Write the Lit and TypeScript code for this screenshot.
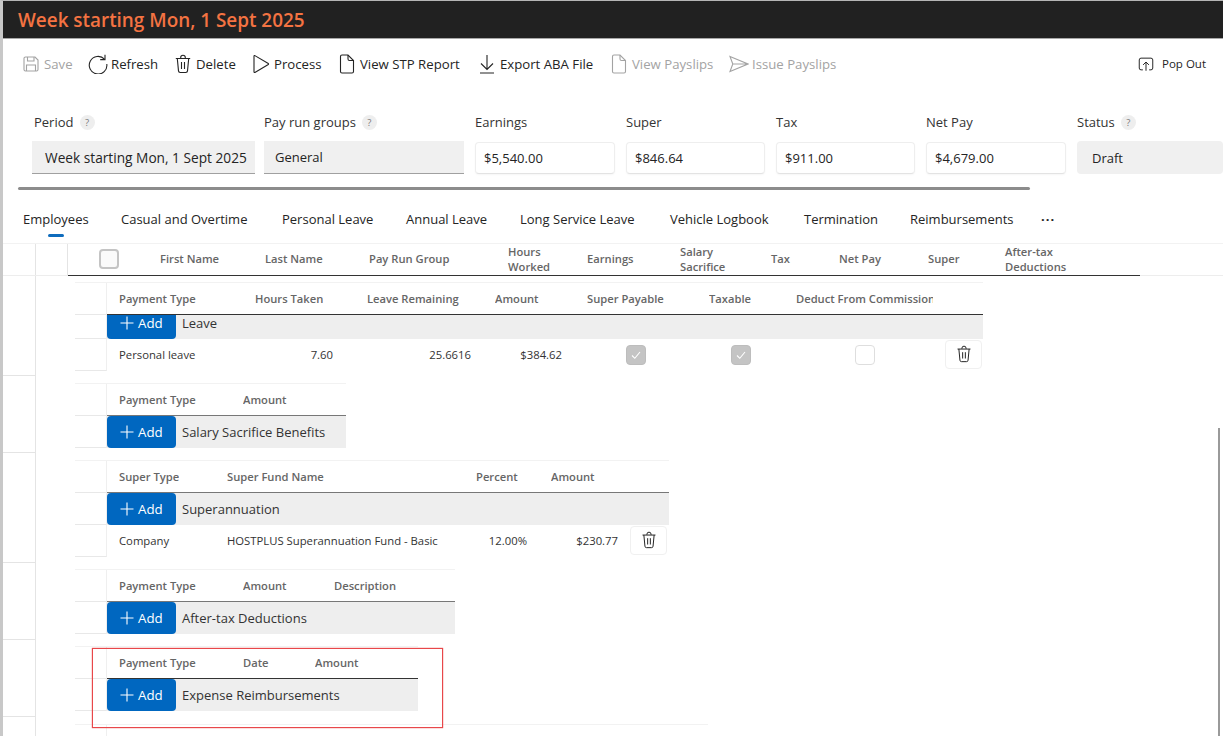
import { LitElement, html, css, svg, nothing } from "lit";
import { customElement } from "lit/decorators.js";

const I = {
  save: svg`<path d="M3 4.500A1.500 1.500 0 0 1 4.500 3H14l3 3v9.500a1.500 1.500 0 0 1-1.500 1.500h-11A1.500 1.500 0 0 1 3 15.500z"/><path d="M6.500 3v4h6.500V3M5.500 17v-6h9v6"/>`,
  refresh: svg`<path d="M16.500 5.200A8.800 8.800 0 1 0 18.800 10"/><path d="M17 .8v4.800h-4.800"/>`,
  trash: svg`<path d="M7.700 4.300V3.600A2.300 2.300 0 0 1 12.300 3.600v.7M2.800 4.500h14.400M4.300 4.500l1.200 12.400A1.700 1.700 0 0 0 7.200 18.500h5.600a1.700 1.700 0 0 0 1.700-1.600l1.200-12.400M8.500 8v7M11.500 8v7"/>`,
  play: svg`<path d="M3 2.100v15.800a.6.6 0 0 0 .9.500l13.400-7.900a.6.6 0 0 0 0-1L3.900 1.600a.6.6 0 0 0-.9.500z"/>`,
  doc: svg`<path d="M3.500 2.500A1.500 1.500 0 0 1 5 1h6l5.500 5.500v11A1.500 1.500 0 0 1 15 19H5a1.500 1.500 0 0 1-1.500-1.500z"/><path d="M11 1v4A1.500 1.500 0 0 0 12.500 6.500h4"/>`,
  down: svg`<path d="M10 1v14M4 9.500l6 6 6-6M3 19h14"/>`,
  send: svg`<path d="M1 2.500l18 7.500-18 7.500 2.800-7.500zM3.800 10H19"/>`,
  pop: svg`<path d="M6.500 16.500H4.500A2 2 0 0 1 2.500 14.500v-9a2 2 0 0 1 2-2h11a2 2 0 0 1 2 2v9a2 2 0 0 1-2 2h-2M10 17.500V8M6.800 11L10 7.800l3.200 3.200"/>`,
};

const ico = (p: unknown, s = 20) =>
  html`<svg class="ico" width=${s} height=${s} viewBox="0 0 20 20">${p}</svg>`;

const toolbar = [
  { t: "Save", i: I.save, off: true },
  { t: "Refresh", i: I.refresh },
  { t: "Delete", i: I.trash },
  { t: "Process", i: I.play },
  { t: "View STP Report", i: I.doc },
  { t: "Export ABA File", i: I.down },
  { t: "View Payslips", i: I.doc, off: true },
  { t: "Issue Payslips", i: I.send, off: true },
];

const fields = [
  { l: "Period", v: "Week starting Mon, 1 Sept 2025", k: "ro", h: true },
  { l: "Pay run groups", v: "General", k: "ro", h: true },
  { l: "Earnings", v: "$5,540.00", k: "inp" },
  { l: "Super", v: "$846.64", k: "inp" },
  { l: "Tax", v: "$911.00", k: "inp" },
  { l: "Net Pay", v: "$4,679.00", k: "inp" },
  { l: "Status", v: "Draft", k: "st", h: true },
];

const tabs = ["Employees", "Casual and Overtime", "Personal Leave", "Annual Leave", "Long Service Leave", "Vehicle Logbook", "Termination", "Reimbursements"];

const mainCols: [string[], number][] = [
  [["First Name"], 105], [["Last Name"], 104], [["Pay Run Group"], 139], [["Hours", "Worked"], 79],
  [["Earnings"], 93], [["Salary", "Sacrifice"], 91], [["Tax"], 68], [["Net Pay"], 89], [["Super"], 77], [["After-tax", "Deductions"], 147],
];

type Cell = string | { chk: boolean } | { trash: true } | { v: string; pr: number };
interface Sec { cols: [string, number][]; title: string; row?: Cell[]; short?: boolean; dark?: boolean; last?: boolean }

const secs: Sec[] = [
  {
    short: true,
    dark: true,
    title: "Leave",
    cols: [["Payment Type", 136], ["Hours Taken", 112], ["Leave Remaining", 128], ["Amount", 92], ["Super Payable", 122], ["Taxable", 87], ["Deduct From Commission", 161], ["", 38]],
    row: ["Personal leave", { v: "7.60", pr: 22 }, { v: "25.6616", pr: 12 }, { v: "$384.62", pr: 13 }, { chk: true }, { chk: true }, { chk: false }, { trash: true }],
  },
  { title: "Salary Sacrifice Benefits", cols: [["Payment Type", 124], ["Amount", 90], ["", 25]] },
  {
    title: "Superannuation",
    cols: [["Super Type", 108], ["Super Fund Name", 249], ["Percent", 75], ["Amount", 91], ["", 39]],
    row: ["Company", "HOSTPLUS Superannuation Fund - Basic", { v: "12.00%", pr: 12 }, { v: "$230.77", pr: 12 }, { trash: true }],
  },
  { title: "After-tax Deductions", cols: [["Payment Type", 124], ["Amount", 91], ["Description", 108], ["", 25]] },
  { title: "Expense Reimbursements", dark: true, cols: [["Payment Type", 124], ["Date", 72], ["Amount", 91], ["", 24]] },
  { title: "", last: true, cols: [["ETP Code", 96], ["PAYGW", 86], ["Tax Free Amount", 138], ["Taxable Amount", 135], ["Comments", 146]] },
];

@customElement("app-root")
export class AppRoot extends LitElement {
  static styles = css`
    :host {
      display: block; position: relative; width: 1223px; height: 736px; overflow: hidden; box-sizing: border-box;
      background: #fff; border-left: 3px solid #c8c8c8; border-top: 1px solid #b5b5b5;
      font-family: "Open Sans", "Noto Sans", sans-serif; color: #242424; font-size: 13px;
    }
    * { box-sizing: border-box; }
    .ico { fill: none; stroke: currentColor; stroke-width: 1.100; flex: none; display: block; }
    .title { height: 38px; background: #212121; border-bottom: 1px solid #a8a8a8; padding-left: 15px; color: #f47342; font-size: 18.900px; font-weight: 600; line-height: 38px; white-space: nowrap; }
    .bar { height: 49px; padding-left: 18px; padding-right: 17px; display: flex; align-items: center; }
    .tools { display: grid; grid-template-columns: 67px 85px 78px 86px 140px 132px 120px auto; flex: 1; align-items: center; }
    .tb { display: flex; align-items: center; gap: 3px; white-space: nowrap; font-size: 13.200px; }
    .tb.off { color: #a3a3a3; }
    .pop { display: flex; align-items: center; gap: 7px; font-size: 11.500px; }
    .form { display: grid; grid-template-columns: 232px 211px 151px 150px 150px 151px 146px; padding: 24px 0 0 29px; }
    .f { padding-right: 11px; min-width: 0; }
    .f:first-child { padding-right: 9px; }
    .f:last-child { padding-right: 0; }
    .lbl { height: 20px; display: flex; align-items: center; gap: 6px; font-size: 13px; color: #333; white-space: nowrap; }
    .f:first-child .lbl { padding-left: 2px; }
    .help { width: 15px; height: 15px; border-radius: 50%; background: #eee; color: #777; font-size: 9.500px; display: flex; align-items: center; justify-content: center; }
    .box { height: 33px; margin-top: 9px; display: flex; align-items: center; font-size: 13px; white-space: nowrap; overflow: hidden; }
    .f:first-child .box { font-size: 13.700px; padding-left: 13px; }
    .ro { background: #f0f0f0; border-bottom: 1px solid #a0a0a0; padding-left: 11px; }
    .inp { background: #fff; border: 1px solid #eee; border-bottom-color: #e3e3e3; border-radius: 4px; padding-left: 8px; height: 32px; margin-top: 10px; box-shadow: 0 1px 2px rgba(0,0,0,.04); }
    .st { background: #f0f0f0; border-radius: 4px; padding-left: 15px; }
    .hs { height: 3px; width: 1012px; margin: 13px 0 0 15px; background: #8c8c8c; border-radius: 2px; }
    .tabs { height: 54px; border-bottom: 1px solid #f2f2f2; padding: 19px 0 0 20px; display: grid; grid-template-columns: 98px 161px 124px 114px 150px 134px 106px 131px auto; justify-items: start; }
    .tab { display: flex; flex-direction: column; align-items: center; font-size: 13px; white-space: nowrap; line-height: 20px; height: 34px; color: #242424; }
    .tab i { display: block; width: 16px; height: 3px; border-radius: 2px; background: #0f6cbd; margin-top: 5px; }
    .more { font-weight: 700; letter-spacing: 1px; line-height: 14px; }
    .hrow { display: flex; height: 32px; border-bottom: 1px solid #ededed; }
    .g { width: 32px; flex: none; border-right: 1px solid #e4e4e4; }
    .g:first-child { width: 33px; }
    .heads { display: flex; border-bottom: 1px solid #333; height: 32px; margin-bottom: -1px; padding-bottom: 2px; }
    .chkcol { width: 80px; display: flex; align-items: center; padding-left: 31px; }
    .cb { width: 20px; height: 20px; border-radius: 4px; border: 1px solid #bdbdbd; background: #fafafa; display: flex; align-items: center; justify-content: center; color: #fff; }
    .cb.big { border-width: 2px; border-color: #c4c4c4; }
    .cb.on { background: #c4c4c4; border-color: #bdbdbd; }
    .cb.off { background: #fff; border-color: #dedede; }
    .hc { padding-left: 12px; font-size: 11.200px; font-weight: 600; color: #666; line-height: 15px; display: flex; flex-direction: column; justify-content: center; white-space: nowrap; overflow: hidden; }
    .row { display: flex; }
    .g1 { width: 33px; flex: none; border-right: 1px solid #e4e4e4; border-bottom: 1px solid #e4e4e4; }
    .wrap { margin-left: 39px; padding: 6px 0; }
    .r0 .wrap { padding-bottom: 5px; }
    .r1 .wrap { padding: 7px 0 5px; }
    .r2 .wrap, .r5 .wrap { padding-top: 7px; }
    .r5 .wrap { padding-bottom: 0; }
    .sec { border-top: 1px solid #f2f2f2; }
    .line { display: flex; }
    .gn { width: 32px; flex: none; border-right: 1px solid #efefef; border-bottom: 1px solid #e8e8e8; }
    .sh { display: flex; height: 32px; border-bottom: 1px solid #777; }
    .dark .sh { border-bottom-color: #333; }
    .shc { padding: 0 12px; font-size: 11.200px; font-weight: 600; color: #666; display: flex; align-items: center; white-space: nowrap; }
    .shc span { display: block; overflow: hidden; }
    .band { height: 32px; flex: 1; background: #eee; display: flex; align-items: flex-end; overflow: hidden; }
    .band.short { height: 24px; }
    .add { width: 69px; height: 32px; flex: none; background: #0067c0; border-radius: 4px; color: #fff; display: flex; align-items: center; gap: 4px; padding-left: 13px; font-size: 13.300px; }
    .add svg { stroke: #fff; stroke-width: 1.100; fill: none; }
    .bt { height: 32px; line-height: 32px; padding-left: 6px; font-size: 13px; color: #333; white-space: nowrap; }
    .dr { height: 32px; align-items: center; }
    .c { padding-left: 12px; padding-bottom: 2px; font-size: 11.300px; color: #333; white-space: nowrap; display: flex; align-items: center; height: 32px; }
    .c.r { justify-content: flex-end; padding-left: 0; }
    .c.m { justify-content: center; padding-left: 0; padding-bottom: 0; }
    .tr { width: 37px; height: 29px; border: 1px solid #f0f0f0; border-radius: 4px; display: flex; align-items: center; justify-content: center; color: #222; }
    .mark { position: absolute; left: 89px; top: 647px; width: 351px; height: 80px; border: 1px solid #e8474a; box-shadow: 0 0 1px #e53935; pointer-events: none; }
    .vs { position: absolute; right: 3px; top: 427px; width: 2px; height: 320px; background: #9a9a9a; }
  `;

  private cell(c: Cell, w: number) {
    const st = `width:${w}px`;
    if (typeof c === "string") return html`<div class="c" style=${st}>${c}</div>`;
    if ("v" in c) return html`<div class="c r" style="${st};padding-right:${c.pr}px">${c.v}</div>`;
    if ("chk" in c)
      return html`<div class="c m" style=${st}><div class="cb ${c.chk ? "on" : "off"}">${c.chk
        ? html`<svg width="12" height="12" viewBox="0 0 12 12" fill="none" stroke="#fff" stroke-width="1.100"><path d="M2 6.500l2.800 2.800L10 3"/></svg>`
        : nothing}</div></div>`;
    return html`<div class="c" style="${st};padding-left:0"><div class="tr">${ico(I.trash, 18)}</div></div>`;
  }

  private section(s: Sec, i: number) {
    return html`<div class="row r${i}">
      <div class="g1"></div>
      <div class="wrap"><div class="sec ${s.dark ? "dark" : ""}">
        <div class="line"><div class="gn"></div>
          <div class="sh">${s.cols.map(([t, w]) => html`<div class="shc" style="width:${w}px"><span>${t}</span></div>`)}</div>
        </div>
        ${s.last ? nothing : html`<div class="line"><div class="gn"></div>
          <div class="band ${s.short ? "short" : ""}">
            <div class="add"><svg width="14" height="14" viewBox="0 0 14 14"><path d="M7 .5v13M.5 7h13"/></svg>Add</div>
            <div class="bt">${s.title}</div>
          </div></div>`}
        ${s.row ? html`<div class="line dr"><div class="gn" style="height:32px"></div>${s.row.map((c, k) => this.cell(c, s.cols[k][1]))}</div>` : nothing}
      </div></div>
    </div>`;
  }

  render() {
    return html`
      <div class="title">Week starting Mon, 1 Sept 2025</div>
      <div class="bar">
        <div class="tools">
          ${toolbar.map((b) => html`<div class="tb ${b.off ? "off" : ""}">${ico(b.i)}<span>${b.t}</span></div>`)}
        </div>
        <div class="pop">${ico(I.pop, 18)}<span>Pop Out</span></div>
      </div>
      <div class="form">
        ${fields.map((f) => html`<div class="f">
          <div class="lbl">${f.l}${f.h ? html`<span class="help">?</span>` : nothing}</div>
          <div class="box ${f.k}">${f.v}</div>
        </div>`)}
      </div>
      <div class="hs"></div>
      <div class="tabs">
        ${tabs.map((t, i) => html`<div class="tab">${t}${i === 0 ? html`<i></i>` : nothing}</div>`)}
        <div class="tab more">...</div>
      </div>
      <div class="hrow">
        <div class="g"></div><div class="g"></div>
        <div class="heads">
          <div class="chkcol"><div class="cb big"></div></div>
          ${mainCols.map(([t, w]) => html`<div class="hc" style="width:${w}px">${t.map((x) => html`<span>${x}</span>`)}</div>`)}
        </div>
      </div>
      ${secs.map((s, i) => this.section(s, i))}
      <div class="mark"></div>
      <div class="vs"></div>
    `;
  }
}
